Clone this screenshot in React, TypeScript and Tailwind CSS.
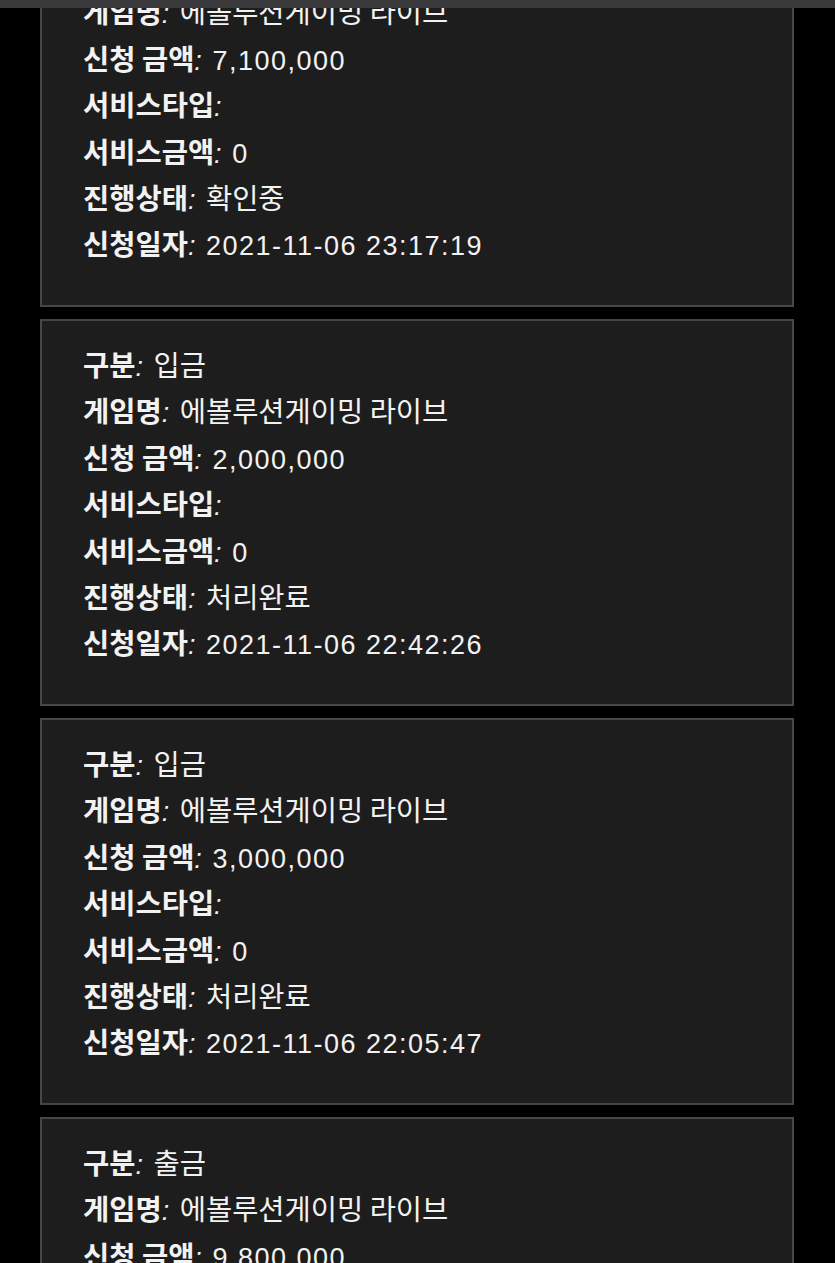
const rows = [
  { type: '입금', amount: '7,100,000', status: '확인중', date: '2021-11-06 23:17:19' },
  { type: '입금', amount: '2,000,000', status: '처리완료', date: '2021-11-06 22:42:26' },
  { type: '입금', amount: '3,000,000', status: '처리완료', date: '2021-11-06 22:05:47' },
  { type: '출금', amount: '9,800,000', status: '처리완료', date: '2021-11-06 21:30:12' },
];

// latin parts (colon, numbers) are set in a narrower face with a bit of tracking
const Latin = ({ children }: { children: React.ReactNode }) => (
  <span className="font-['Liberation_Sans',sans-serif] text-[27px] tracking-[1.5px]">{children}</span>
);

const Field = ({ label, value, latin }: { label: string; value: string; latin?: boolean }) => (
  <div className="h-[46.4px] leading-[46.4px] whitespace-nowrap">
    <span className="font-bold">{label}</span>
    <Latin>
      <span className="italic">:</span>{' '}
    </Latin>
    {latin ? <Latin>{value}</Latin> : value}
  </div>
);

const App = () => {
  return (
    <div className="relative h-screen overflow-hidden bg-black text-[#f2f2f2] text-[28.5px] font-['Noto_Sans_CJK_KR',sans-serif]">
      <div className="absolute top-0 left-0 right-0 h-[8px] bg-[#3a3a3d] z-10" />
      <div className="mt-[-80px] flex flex-col gap-[12px] pl-[40px] pr-[41px]">
        {rows.map((r, i) => (
          <div
            key={i}
            className="h-[387px] bg-[#1d1d1d] border-2 border-[#474747] pl-[41px] pt-[20px]"
          >
            <Field label="구분" value={r.type} />
            <Field label="게임명" value="에볼루션게이밍 라이브" />
            <Field label="신청 금액" value={r.amount} latin />
            <Field label="서비스타입" value="" />
            <Field label="서비스금액" value="0" latin />
            <Field label="진행상태" value={r.status} />
            <Field label="신청일자" value={r.date} latin />
          </div>
        ))}
      </div>
    </div>
  );
};

export default App;
